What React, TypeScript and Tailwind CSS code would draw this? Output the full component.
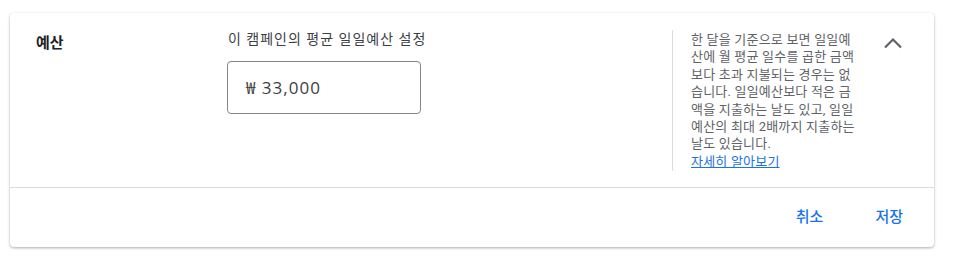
import React from "react";

export default function App() {
  return (
    <div
      className="w-[960px] h-[259px] bg-white pt-[13px] pl-[10px]"
      style={{ fontFamily: 'Roboto, "Noto Sans CJK KR", sans-serif' }}
    >
      <div className="w-[924px] h-[234px] rounded-[4px] bg-white shadow-[0_1px_3px_rgba(60,64,67,0.3),0_1px_2px_rgba(60,64,67,0.15)] flex flex-col">
        <div className="h-[175px] flex border-b border-[#dadce0]">
          <div className="w-[218px] pl-[26px] pt-[18px] text-[15px] font-bold text-[#202124] leading-[24px]">
            예산
          </div>
          <div className="w-[444px] pt-[16px]">
            <div className="text-[14px] tracking-[1px] text-[#3c4043] leading-[20px]">
              이 캠페인의 평균 일일예산 설정
            </div>
            <div className="mt-[12px] -ml-[1px] w-[194px] h-[53px] border border-[#80868b] rounded-[4px] flex items-center pl-[18px] text-[17px] tracking-[1px] text-[#3c4043]" style={{ fontFamily: '"Open Sans", "Noto Sans CJK KR", sans-serif' }}>
              ₩ 33,000
            </div>
          </div>
          <div className="mt-[17px] h-[141px] border-l border-[#dadce0]" />
          <div className="pl-[18px] pt-[18px] w-[190px] text-[13px] tracking-[0.2px] leading-[17.4px] text-[#5f6368]">
            <p className="w-[170px] break-all">
              한 달을 기준으로 보면 일일예산에 월 평균 일수를 곱한 금액보다 초과 지불되는 경우는 없습니다. 일일예산보다 적은 금액을 지출하는 날도 있고, 일일예산의 최대 2배까지 지출하는 날도 있습니다.
            </p>
            <a className="text-[#1a73e8] underline">자세히 알아보기</a>
          </div>
          <div className="pl-[21px] pt-[24px]">
            <svg width="18" height="12" viewBox="0 0 18 12">
              <path d="M1 10.5L9 2.5L17 10.5" fill="none" stroke="#5f6368" strokeWidth="2.2" />
            </svg>
          </div>
        </div>
        <div className="flex-1 flex items-center justify-end pr-[31px] gap-[52px] text-[15px] font-medium text-[#1a73e8]">
          <span>취소</span>
          <span>저장</span>
        </div>
      </div>
    </div>
  );
}
